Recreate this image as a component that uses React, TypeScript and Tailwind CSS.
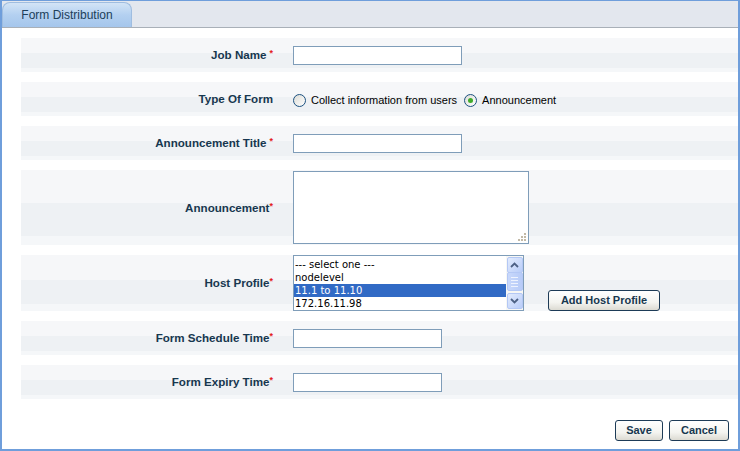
import React from "react";

const rowBg =
  "bg-[linear-gradient(to_bottom,#f6f7f9_0%,#f6f7f9_44%,#eef1f4_44%,#eef1f4_88%,#f5f7f9_88%)]";

function Req({ space = false }: { space?: boolean }) {
  return (
    <span className={`relative -top-[3px] text-[9px] text-[#e3201c] ${space ? "ml-[3px]" : ""}`}>*</span>
  );
}

function Row({
  label,
  h,
  children,
}: {
  label: React.ReactNode;
  h: string;
  children?: React.ReactNode;
}) {
  return (
    <div className={`flex ${h} items-center ${rowBg}`}>
      <div className="w-[252px] shrink-0 text-right text-[11.6px] font-bold text-[#17374f]">{label}</div>
      <div className="ml-[20px] flex items-center">{children}</div>
    </div>
  );
}

function TextBox({ w }: { w: string }) {
  return <div className={`${w} h-[19px] border border-[#7f9db9] bg-white`} />;
}

function Radio({ checked }: { checked?: boolean }) {
  return (
    <span className="flex h-[13px] w-[13px] items-center justify-center rounded-full border border-[#1c5180] bg-[linear-gradient(135deg,#dcdcd6,#ffffff)]">
      {checked ? <span className="h-[5px] w-[5px] rounded-full bg-[#3fab2a]" /> : null}
    </span>
  );
}

function XpButton({ children, w }: { children: React.ReactNode; w: string }) {
  return (
    <div
      className={`flex ${w} h-[21px] items-center justify-center rounded-[3px] border border-[#1d3b57] bg-[linear-gradient(to_bottom,#ffffff_0%,#f4f4f0_60%,#dcdad2_100%)] text-[11px] font-bold text-[#17374f]`}
    >
      {children}
    </div>
  );
}

function ScrollBtn({ up }: { up?: boolean }) {
  return (
    <div className="flex h-[16px] w-[16px] items-center justify-center rounded-[2px] border border-[#b4c8f5] bg-[linear-gradient(135deg,#e2ebfd,#b9cdf9)]">
      <svg width="9" height="6" viewBox="0 0 9 6">
        <path
          d={up ? "M1 5 L4.5 1.5 L8 5" : "M1 1 L4.5 4.5 L8 1"}
          fill="none"
          stroke="#4d6185"
          strokeWidth="1.8"
        />
      </svg>
    </div>
  );
}

export default function App() {
  return (
    <div className="flex h-[451px] w-[740px] flex-col border-x-2 border-b-2 border-t border-[#6f9edb] bg-white font-['Liberation_Sans',Arial,sans-serif]">
      <div className="flex h-[27px] shrink-0 items-end border-b border-[#a9b0b8] bg-[#e3e7ee]">
        <div className="flex h-[25px] w-[130px] items-center justify-center rounded-t-[8px] border border-b-0 border-[#9fbde0] bg-[linear-gradient(to_bottom,#d3e4f6_0%,#b3d0f0_50%,#a5c6ec_100%)] text-[12px] text-[#1c3e5a]">
          Form Distribution
        </div>
      </div>

      <div className="flex flex-col gap-[10px] pl-[19px] pt-[10px]">
        <Row h="h-[34px]" label={<>Job Name<Req space /></>}>
          <TextBox w="w-[169px]" />
        </Row>

        <Row h="h-[34px]" label="Type Of Form">
          <div className="mt-[3px] flex items-center text-[11px] text-black">
            <Radio />
            <span className="ml-[5px]">Collect information from users</span>
            <span className="ml-[7px]">
              <Radio checked />
            </span>
            <span className="ml-[5px]">Announcement</span>
          </div>
        </Row>

        <Row h="h-[34px]" label={<>Announcement Title<Req space /></>}>
          <TextBox w="w-[169px]" />
        </Row>

        <Row h="h-[75px]" label={<>Announcement<Req /></>}>
          <div className="relative h-[73px] w-[236px] border border-[#7f9db9] bg-white">
            <svg className="absolute bottom-[2px] right-[2px]" width="8" height="8" viewBox="0 0 8 8">
              <rect x="6" y="0" width="2" height="2" fill="#c2b9a6" />
              <rect x="3" y="3" width="2" height="2" fill="#c2b9a6" />
              <rect x="6" y="3" width="2" height="2" fill="#c2b9a6" />
              <rect x="0" y="6" width="2" height="2" fill="#c2b9a6" />
              <rect x="3" y="6" width="2" height="2" fill="#c2b9a6" />
              <rect x="6" y="6" width="2" height="2" fill="#c2b9a6" />
            </svg>
          </div>
        </Row>

        <Row h="h-[56px]" label={<>Host Profile<Req /></>}>
          <div className="flex h-[56px] w-[231px] border border-[#7f9db9] bg-white">
            <div className="flex-1 pt-[2px] font-['DejaVu_Sans',Verdana,sans-serif] text-[10px] leading-[13px] text-black">
              <div className="pl-[1px]">--- select one ---</div>
              <div className="pl-[1px]">nodelevel</div>
              <div className="bg-[#316ac5] pl-[1px] text-white">11.1 to 11.10</div>
              <div className="pl-[1px]">172.16.11.98</div>
            </div>
            <div className="flex w-[17px] flex-col items-center justify-between bg-[#f7f7f4] py-[1px]">
              <ScrollBtn up />
              <div className="flex h-[19px] w-[16px] -mt-[1px] flex-col items-center justify-center gap-[2px] rounded-[2px] border border-[#b4c8f5] bg-[linear-gradient(to_right,#c8d8fb,#b7cbf8)]">
                <span className="h-px w-[7px] bg-[#eef3fe]" />
                <span className="h-px w-[7px] bg-[#eef3fe]" />
                <span className="h-px w-[7px] bg-[#eef3fe]" />
                <span className="h-px w-[7px] bg-[#eef3fe]" />
              </div>
              <div className="flex-1" />
              <ScrollBtn />
            </div>
          </div>
          <div className="ml-[24px] mt-[34px]">
            <XpButton w="w-[112px]">Add Host Profile</XpButton>
          </div>
        </Row>

        <Row h="h-[34px]" label={<>Form Schedule Time<Req /></>}>
          <TextBox w="w-[149px]" />
        </Row>

        <Row h="h-[34px]" label={<>Form Expiry Time<Req /></>}>
          <TextBox w="w-[149px]" />
        </Row>
      </div>

      <div className="mt-[21px] flex justify-end gap-[6px] pr-[9px]">
        <XpButton w="w-[48px]">Save</XpButton>
        <XpButton w="w-[60px]">Cancel</XpButton>
      </div>
    </div>
  );
}
